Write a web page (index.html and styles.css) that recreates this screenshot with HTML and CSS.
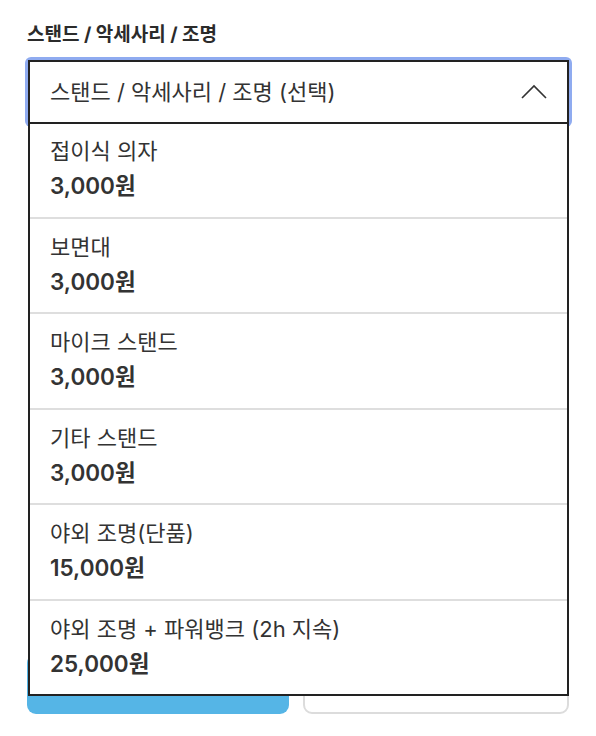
FILE: index.html
```html
<!DOCTYPE html>
<html lang="ko">
<head>
<meta charset="utf-8">
<link rel="stylesheet" href="styles.css">
</head>
<body>
<div class="page">
  <div class="label">스탠드 / 악세사리 / 조명</div>
  <div class="field">
    <div class="select">
      <span class="select-text">스탠드 / 악세사리 / 조명 (선택)</span>
      <svg class="chev" width="26" height="16" viewBox="0 0 26 16"><polyline points="1,14 13,2 25,14" fill="none" stroke="#333" stroke-width="1.6"/></svg>
    </div>
    <ul class="menu">
      <li class="item"><div class="name">접이식 의자</div><div class="price">3,000원</div></li>
      <li class="item"><div class="name">보면대</div><div class="price">3,000원</div></li>
      <li class="item"><div class="name">마이크 스탠드</div><div class="price">3,000원</div></li>
      <li class="item"><div class="name">기타 스탠드</div><div class="price">3,000원</div></li>
      <li class="item"><div class="name">야외 조명(단품)</div><div class="price">15,000원</div></li>
      <li class="item"><div class="name">야외 조명 + 파워뱅크 (2h 지속)</div><div class="price">25,000원</div></li>
    </ul>
  </div>
  <div class="buttons">
    <button class="btn primary">담기</button>
    <button class="btn secondary">취소</button>
  </div>
</div>
</body>
</html>
```
FILE: styles.css
```css
* { box-sizing: border-box; }
html, body { margin: 0; padding: 0; }
html { background: #fff; }
body {
  font-family: Inter, "Noto Sans CJK KR", sans-serif;
  color: #333;
}
.page {
  padding: 24px 27px 0 28px;
}
.label {
  font-size: 19px;
  font-weight: 700;
  line-height: 22px;
  margin-left: -1px;
  margin-bottom: 14px;
  color: #2b2b2b;
}
.field {
  position: relative;
  z-index: 0;
}
.select {
  position: relative;
  height: 64px;
  border: 2px solid #222;
  background: #fff;
  display: flex;
  align-items: center;
  justify-content: space-between;
  padding: 0 20px 0 20px;
}
.select::before {
  content: "";
  position: absolute;
  inset: -5px;
  border-radius: 6px;
  background: #8fabf0;
  z-index: -1;
}
.select-text {
  font-size: 22px;
  line-height: 28px;
  color: #333;
}
.chev { display: block; }
.menu {
  position: absolute;
  left: 0;
  right: 0;
  top: 64px;
  margin: 0;
  padding: 0;
  list-style: none;
  background: #fff;
  border: 2px solid #222;
  border-top: 0;
  z-index: 2;
}
.item {
  padding: 14px 20px 13.5px;
  border-bottom: 2px solid #dedede;
}
.item:first-child { padding-top: 13px; }
.item:last-child { border-bottom: 0; }
.name {
  font-size: 22px;
  line-height: 28px;
  margin-bottom: 4px;
  color: #333;
}
.price {
  font-size: 22.5px;
  font-weight: 600;
  line-height: 34px;
  color: #333;
}
.buttons {
  display: flex;
  gap: 14px;
  margin-top: 530px;
  margin-left: -1px;
}
.btn {
  flex: 1;
  height: 60px;
  border-radius: 9px;
  font-family: inherit;
  font-size: 17px;
  font-weight: 700;
}
.primary {
  background: #55b5e6;
  border: 0;
  color: #fff;
}
.secondary {
  background: #fff;
  border: 2px solid #dcdcdc;
  color: #333;
}
```
